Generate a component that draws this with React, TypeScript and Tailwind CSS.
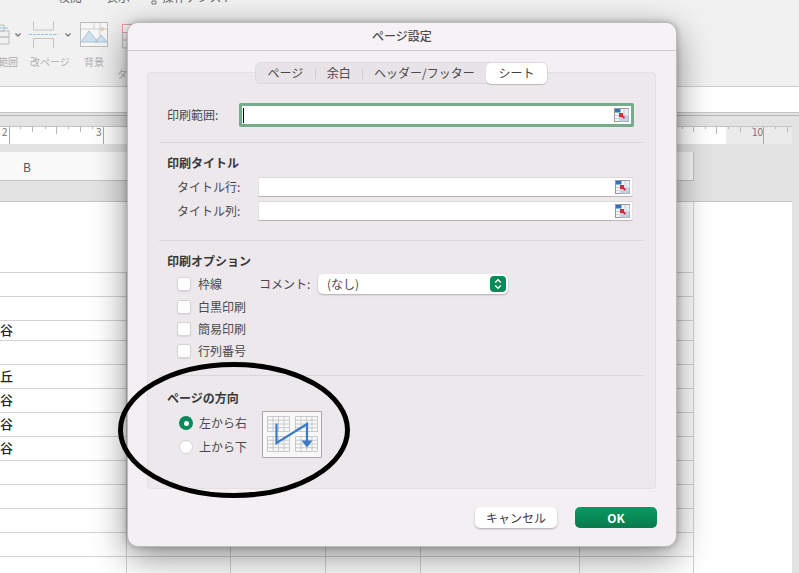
import React from "react";

const rows = [
  { h: "h-[24px]", t: "" },
  { h: "h-[24px]", t: "" },
  { h: "h-[20px]", t: "谷" },
  { h: "h-[24px]", t: "" },
  { h: "h-[24px]", t: "丘" },
  { h: "h-[24px]", t: "谷" },
  { h: "h-[24px]", t: "谷" },
  { h: "h-[24px]", t: "谷" },
  { h: "h-[24px]", t: "" },
  { h: "h-[24px]", t: "" },
  { h: "h-[24px]", t: "" },
  { h: "h-[24px]", t: "" },
  { h: "h-[24px]", t: "" },
];

function RangeIcon() {
  return (
    <svg width="15" height="14" viewBox="0 0 15 14" className="shrink-0">
      <rect x="0.500" y="0.500" width="14" height="13" fill="#f6f6f6" stroke="#9a9a9a" />
      <rect x="6" y="8" width="8.500" height="5.500" fill="#bcd2e8" />
      <rect x="10" y="1" width="4.500" height="7" fill="#e6edf4" />
      <rect x="1" y="1" width="5.500" height="3.500" fill="#2f74c4" />
      <path d="M1 7.500h13M1 10.500h13M5.500 5v8.500M10 1v12.500" stroke="#cfcfcf" strokeWidth="1" fill="none" />
      <rect x="5" y="5" width="4" height="4" fill="#d42a3a" />
      <path d="M7.500 7.500l3 2.500" stroke="#d42a3a" strokeWidth="2" />
    </svg>
  );
}

function MiniGrid({ x, y }: { x: number; y: number }) {
  const vs = [0, 5.500, 11, 16.500, 22];
  const hs = [0, 3.750, 7.500, 11.250, 15];
  return (
    <g stroke="#c9c9c9" strokeWidth="1" fill="none">
      {vs.map((v) => (
        <path key={"v" + v} d={`M${x + v} ${y}v15`} />
      ))}
      {hs.map((v) => (
        <path key={"h" + v} d={`M${x} ${y + v}h22`} />
      ))}
    </g>
  );
}

function Label({ children, w }: { children: React.ReactNode; w?: string }) {
  return <span className={`text-[12px] leading-[16px] text-[#4a484a] ${w ?? ""}`}>{children}</span>;
}

function Heading({ children }: { children: React.ReactNode }) {
  return <div className="text-[12px] leading-[16px] font-bold text-[#3a383a]">{children}</div>;
}

function Check({ label, mt }: { label: string; mt?: string }) {
  return (
    <div className={`flex items-center gap-[7px] h-[16px] ${mt ?? ""}`}>
      <span className="w-[14px] h-[14px] rounded-[3px] bg-white border border-[#d6d3d6] shadow-[0_1px_1px_rgba(0,0,0,0.08)]" />
      <Label>{label}</Label>
    </div>
  );
}

function TextField() {
  return (
    <div className="w-[375px] h-[20px] bg-white border-b border-b-[#b9b6b9] border-t border-t-[#dcd9dc] border-x border-x-[#e4e1e4] flex items-center justify-end pr-[2px]">
      <RangeIcon />
    </div>
  );
}

function Tab({ label, w }: { label: string; w: string }) {
  return <div className={`h-full ${w} flex items-center justify-center text-[12px] text-[#4a484a]`}>{label}</div>;
}

export default function App() {
  return (
    <div className="relative w-[799px] h-[573px] overflow-hidden bg-[#e3e3e3] font-['Noto_Sans_CJK_JP','Liberation_Sans',sans-serif]">
      {/* background: ribbon */}
      <div className="h-[87px] bg-[#f1f1f1] border-b border-b-[#cfcfcf] overflow-hidden">
        <div className="flex gap-[24px] pl-[58px] -mt-[11px] h-[16px] text-[12px] leading-[16px] text-[#666]">
          <span>校閲</span>
          <span>表示</span>
          <span className="flex items-center -ml-[4px] gap-[4px]">
            <svg width="8" height="16" viewBox="0 0 8 16">
              <path d="M2 12h4v3H2z" fill="none" stroke="#777" />
            </svg>
            操作アシスト
          </span>
        </div>
        <div className="flex mt-[16px] items-start">
          <svg width="25" height="27" viewBox="0 0 25 27" className="shrink-0">
            <path d="M-6 4H4v6H-6zM-6 10H9v6H-6zM-6 16H9v7H-6z" fill="none" stroke="#bdbdbd" />
            <path d="M-6 7H8" stroke="#8fc7e0" />
            <path d="M15.500 12.500l2.500 2.500 2.500-2.500" fill="none" stroke="#777" strokeWidth="1.300" />
          </svg>
          <svg width="45" height="27" viewBox="0 0 45 27" className="ml-[4px] shrink-0">
            <path d="M4.500 0v9h20V0M4.500 27v-9.500h20V27" fill="none" stroke="#c4c4c4" />
            <path d="M0 13.500h29" stroke="#8fc7e0" strokeDasharray="3 1" />
            <path d="M36.500 12.500l2.500 2.500 2.500-2.500" fill="none" stroke="#777" strokeWidth="1.300" />
          </svg>
          <svg width="28" height="25" viewBox="0 0 28 25" className="ml-[6px] mt-[1px] shrink-0">
            <rect x="0.500" y="0.500" width="27" height="24" fill="#f7f7f7" stroke="#bdbdbd" />
            <path d="M1 20L9 9l9 11zM15 20l6-7 6 7z" fill="#cfe1ee" stroke="#a9c4d6" />
            <circle cx="22" cy="7" r="2" fill="#f5cfa8" />
            <path d="M14 1v6M1 7h26M20 1v12" stroke="#cfcfcf" fill="none" />
          </svg>
          <svg width="12" height="25" viewBox="0 0 12 25" className="ml-[14px] mt-[3px] shrink-0">
            <rect x="0.500" y="0.500" width="11" height="8" fill="#fff" stroke="#e8a0a8" />
            <path d="M0.500 9v15h11M0.500 16h11M6 9v15" fill="none" stroke="#bdbdbd" />
          </svg>
        </div>
        <div className="flex text-[10px] leading-[14px] text-[#aeaeae] mt-[6px] whitespace-nowrap">
          <span className="w-[24px] -ml-[6px] text-right">範囲</span>
          <span className="w-[40px] ml-[12px]">改ページ</span>
          <span className="ml-[14px]">背景</span>
        </div>
        <div className="text-[10px] leading-[14px] text-[#aeaeae] ml-[117px] -mt-[2px]">タ</div>
      </div>
      {/* formula bar */}
      <div className="h-[26px] bg-white border-b border-b-[#c6c6c6]" />
      <div className="h-[3px] border-b border-b-[#b6b6b6]" />
      {/* ruler */}
      <div className="relative mt-[10px] h-[18px] w-[792px] border-t border-t-[#c4c4c4] bg-[linear-gradient(to_right,#ffffff_726px,#ebebeb_726px)] text-[10px] leading-[10px] text-[#777]">
        <svg width="792" height="18" viewBox="0 0 792 18" className="block">
          <path d="M9.500 0v17M103.500 0v17M763.500 0v17" stroke="#aaa" fill="none" />
          <path d="M56.500 0v7M716.500 0v7M32.500 0v5M80.500 0v5M693.500 0v5M740.500 0v5M787.500 0v5" stroke="#b8b8b8" fill="none" />
          <path d="M20.500 0v2M45.500 0v2M68.500 0v2M92.500 0v2M682.500 0v2M705.500 0v2M728.500 0v2M752.500 0v2M775.500 0v2" stroke="#b8b8b8" fill="none" />
        </svg>
        <span className="absolute left-[2px] top-0">2</span>
        <span className="absolute left-[96px] top-0">3</span>
        <span className="absolute left-[752px] top-0">10</span>
      </div>
      {/* column header */}
      <div className="mt-[8px] w-[694px] h-[29px] bg-[#f9f9f9] border-b border-r border-[#c2c2c2] pl-[23px] text-[12px] leading-[29px] text-[#555]">
        B
      </div>
      {/* sheet */}
      <div className="mt-[20px] w-[792px] h-[372px] bg-white border-t border-t-[#c6c6c6]">
        <div className="h-[71px] border-b border-b-[#d2d2d2] w-[694px] border-r border-r-[#d2d2d2]" />
        {rows.map((r, i) => (
          <div key={i} className={`${r.h} w-[694px] flex border-b border-b-[#d2d2d2]`}>
            <div className="w-[127px] border-r border-r-[#d2d2d2] flex items-center pb-[1px] text-[13px] leading-[18px] text-[#222] font-medium">{r.t}</div>
            <div className="w-[104px] border-r border-r-[#d2d2d2]" />
            <div className="w-[95px] border-r border-r-[#d2d2d2]" />
            <div className="w-[95px] border-r border-r-[#d2d2d2]" />
            <div className="w-[159px] border-r border-r-[#d2d2d2]" />
            <div className="w-[114px] border-r border-r-[#d2d2d2]" />
          </div>
        ))}
      </div>

      {/* dialog */}
      <div className="absolute left-[127px] top-[22px] w-[550px] h-[525px] rounded-[11px] bg-[#f3eff3] border border-[#bdbabd] shadow-[0_10px_35px_rgba(0,0,0,0.45),0_0_6px_rgba(0,0,0,0.25)] flex flex-col">
        <div className="h-[28px] shrink-0 pb-[2px] border-b border-b-[#cdc9cd] flex items-center justify-center text-[12px] font-medium text-[#4e4c4e] rounded-t-[11px] bg-[#f6f2f6]">
          ページ設定
        </div>
        <div className="px-[19px] pt-[21px]">
          <div className="h-[417px] w-[509px] rounded-[4px] bg-[#ece8ec] border border-[#e3dfe3] pl-[11px] pr-[12px]">
            {/* tabs */}
            <div className="-mt-[11px] ml-[96px] h-[22px] w-[293px] rounded-[6px] bg-[#e7e3e7] border border-[#dcd8dc] flex items-center">
              <Tab label="ページ" w="w-[59px]" />
              <span className="w-px h-[11px] bg-[#d0ccd0]" />
              <Tab label="余白" w="w-[46px]" />
              <span className="w-px h-[11px] bg-[#d0ccd0]" />
              <Tab label="ヘッダー/フッター" w="w-[124px]" />
              <div className="w-[61px] h-[21px] rounded-[5px] bg-white shadow-[0_1px_1px_rgba(0,0,0,0.2)] flex items-center justify-center text-[12px] text-[#3f3d3f]">
                シート
              </div>
            </div>
            {/* print area */}
            <div className="flex items-center pl-[8px] mt-[19px] h-[24px]">
              <Label w="w-[72px]">印刷範囲:</Label>
              <div className="w-[395px] h-[24px] shrink-0 bg-white border-[3px] border-[#74ac8c] rounded-[2px] flex items-center justify-between pr-[2px] pl-[1px]">
                <span className="w-px h-[15px] bg-black" />
                <RangeIcon />
              </div>
            </div>
            <div className="h-px bg-[#d9d5d9] mt-[15px]" />
            {/* print titles */}
            <div className="pl-[8px] mt-[12px]">
              <Heading>印刷タイトル</Heading>
              <div className="flex items-center mt-[6px] h-[20px] pl-[10px]">
                <Label w="w-[81px]">タイトル行:</Label>
                <TextField />
              </div>
              <div className="flex items-center mt-[4px] h-[20px] pl-[10px]">
                <Label w="w-[81px]">タイトル列:</Label>
                <TextField />
              </div>
            </div>
            <div className="h-px bg-[#d9d5d9] mt-[19px]" />
            {/* print options */}
            <div className="pl-[8px] mt-[12px]">
              <Heading>印刷オプション</Heading>
              <div className="flex items-center mt-[4px] h-[22px] pl-[10px]">
                <Check label="枠線" />
                <Label w="ml-[37px] w-[59px]">コメント:</Label>
                <div className="w-[190px] h-[20px] rounded-[5px] bg-white shadow-[0_1px_2px_rgba(0,0,0,0.25)] flex items-center justify-between pl-[9px] pr-[2px]">
                  <span className="text-[12px] text-[#4a484a]">(なし)</span>
                  <span className="w-[16px] h-[16px] rounded-[4px] bg-[#0a8a58] flex items-center justify-center">
                    <svg width="10" height="14" viewBox="0 0 10 14">
                      <path d="M2.200 5.500L5 2.800l2.800 2.700M2.200 8.500L5 11.200l2.800-2.700" fill="none" stroke="#fff" strokeWidth="1.400" />
                    </svg>
                  </span>
                </div>
              </div>
              <div className="pl-[10px]">
                <Check label="白黒印刷" mt="mt-[4px]" />
                <Check label="簡易印刷" mt="mt-[6px]" />
                <Check label="行列番号" mt="mt-[6px]" />
              </div>
            </div>
            <div className="h-px bg-[#d9d5d9] mt-[16px]" />
            {/* direction */}
            <div className="pl-[8px] mt-[14px]">
              <Heading>ページの方向</Heading>
              <div className="flex mt-[5px] pl-[12px]">
                <div className="flex flex-col pt-[4px]">
                  <div className="flex items-center gap-[6px] h-[16px]">
                    <span className="w-[14px] h-[14px] rounded-full bg-[#0a8a58] flex items-center justify-center">
                      <span className="w-[5px] h-[5px] rounded-full bg-white" />
                    </span>
                    <Label>左から右</Label>
                  </div>
                  <div className="flex items-center gap-[6px] h-[16px] mt-[8px]">
                    <span className="w-[14px] h-[14px] rounded-full bg-white border border-[#d6d3d6]" />
                    <Label>上から下</Label>
                  </div>
                </div>
                <div className="ml-[15px] w-[60px] h-[47px] bg-[#f8f8f8] border border-[#a9a6a9] rounded-[1px]">
                  <svg width="58" height="45" viewBox="0 0 58 45" className="block">
                    <MiniGrid x={4.500} y={4.500} />
                    <MiniGrid x={32.500} y={4.500} />
                    <MiniGrid x={4.500} y={24.500} />
                    <MiniGrid x={32.500} y={24.500} />
                    <path d="M13.500 11.500V31L44 12V29" fill="none" stroke="#3a7bc8" strokeWidth="2.200" />
                    <path d="M38.500 28.500h11L44 35.500z" fill="#3a7bc8" />
                  </svg>
                </div>
              </div>
            </div>
          </div>
          {/* buttons */}
          <div className="flex justify-end gap-[18px] mt-[18px]">
            <button className="w-[82px] h-[21px] rounded-[5px] bg-white shadow-[0_1px_2px_rgba(0,0,0,0.3)] text-[12px] leading-[20px] text-[#3f3d3f]">
              キャンセル
            </button>
            <button className="w-[82px] h-[21px] rounded-[5px] bg-gradient-to-b from-[#0a9a62] to-[#087a4c] text-[12px] leading-[20px] font-bold text-white">
              OK
            </button>
          </div>
        </div>
      </div>

      {/* hand-drawn ellipse */}
      <svg width="799" height="573" viewBox="0 0 799 573" className="absolute left-0 top-0 pointer-events-none">
        <ellipse cx="234" cy="430" rx="113.500" ry="65.500" fill="none" stroke="#000" strokeWidth="5" />
      </svg>
    </div>
  );
}
